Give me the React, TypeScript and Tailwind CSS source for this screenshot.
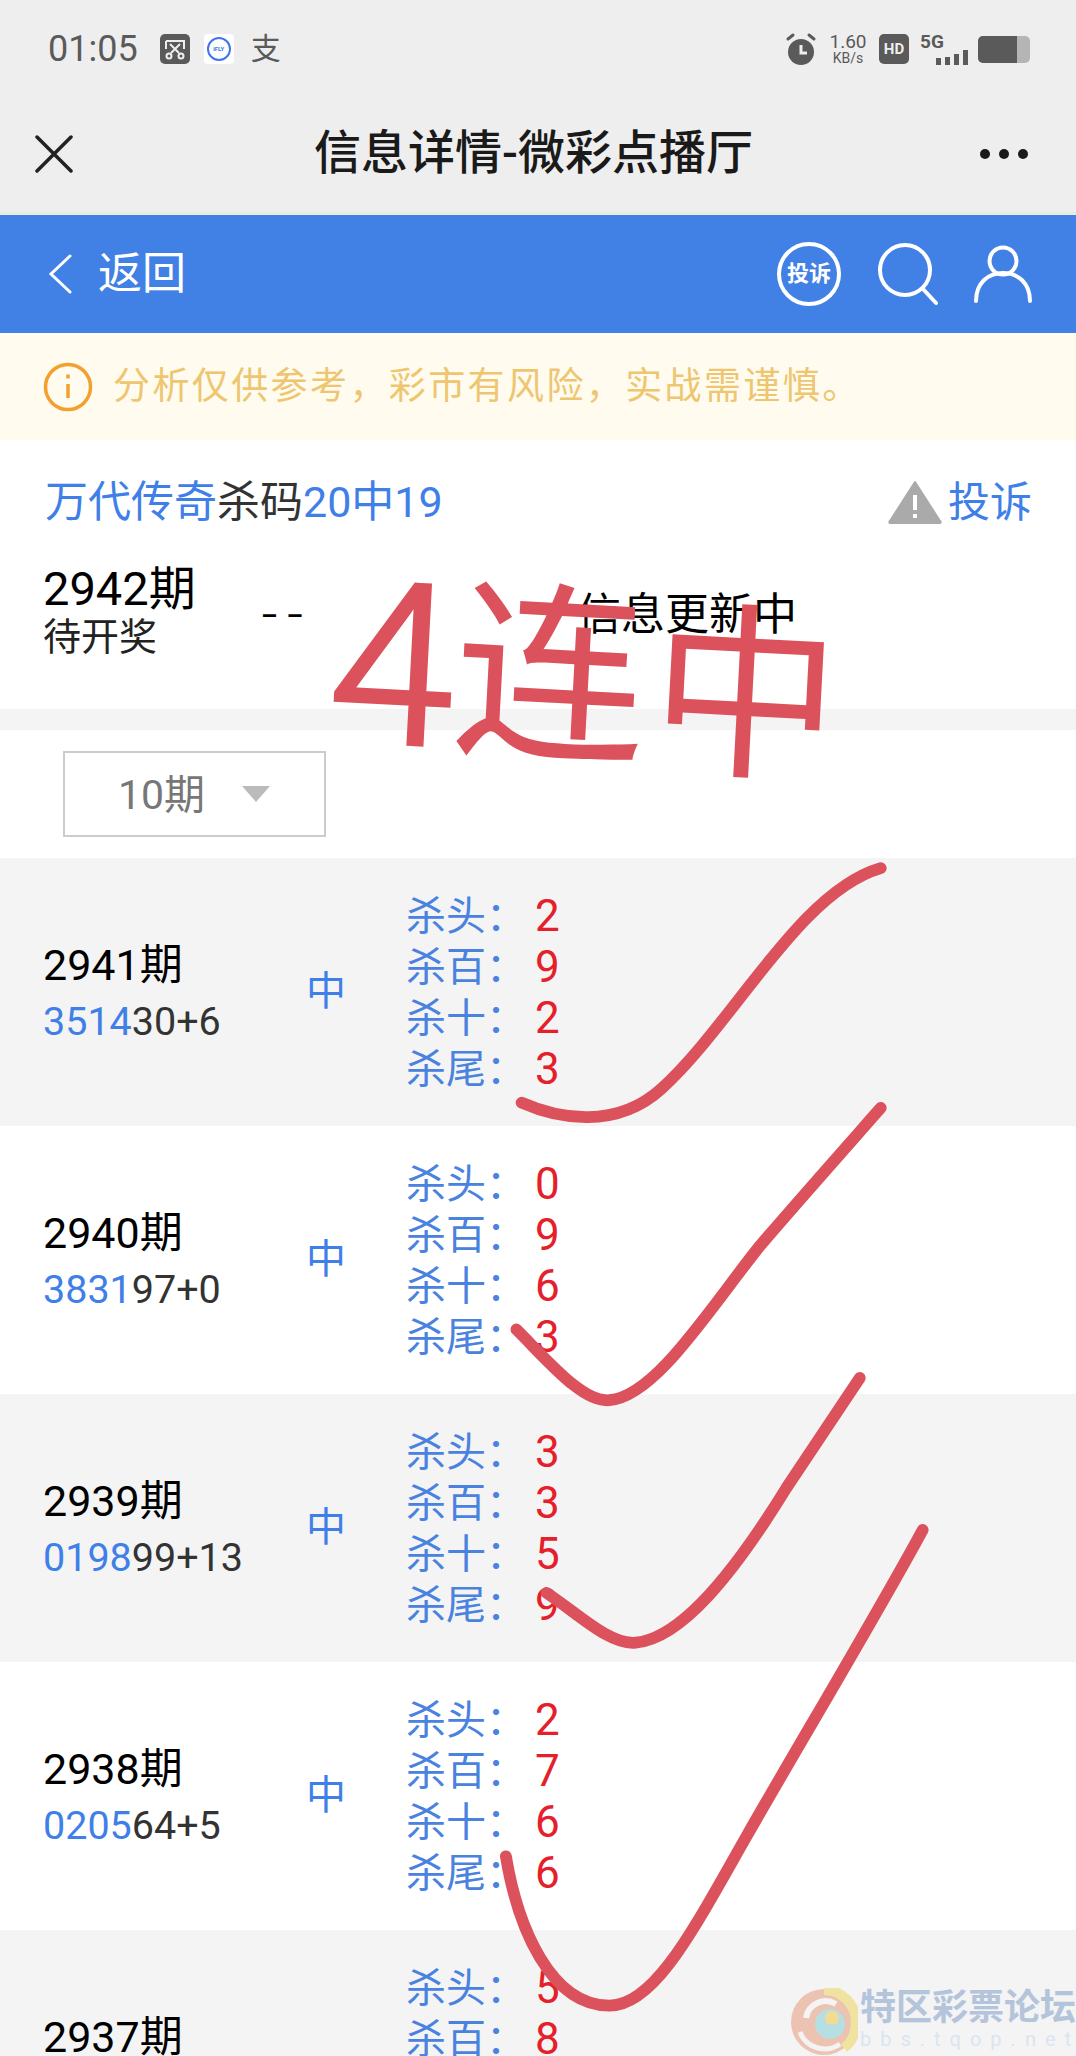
import React from "react";

const ROWS = [
  { issue: "2941期", head: "3514", tail: "30+6", kills: ["2", "9", "2", "3"] },
  { issue: "2940期", head: "3831", tail: "97+0", kills: ["0", "9", "6", "3"] },
  { issue: "2939期", head: "0198", tail: "99+13", kills: ["3", "3", "5", "9"] },
  { issue: "2938期", head: "0205", tail: "64+5", kills: ["2", "7", "6", "6"] },
  { issue: "2937期", head: "", tail: "", kills: ["5", "8", "", ""] },
];

const LABELS = ["杀头", "杀百", "杀十", "杀尾"];

function StatusIcons() {
  return (
    <div className="flex items-center text-[#5a5a5a]">
      <svg width="40" height="36" viewBox="0 0 40 36" fill="none" className="mr-[6px]">
        <circle cx="19" cy="21" r="13" fill="#5a5a5a" />
        <path d="M6 8l5-4M32 8l-5-4" stroke="#5a5a5a" strokeWidth="3" strokeLinecap="round" />
        <path d="M19 14v8h6" stroke="#eeeeee" strokeWidth="3" fill="none" />
      </svg>
      <div className="flex w-[40px] flex-col items-center leading-none">
        <span className="text-[19px] leading-[19px]">1.60</span>
        <span className="text-[14px] leading-[15px]">KB/s</span>
      </div>
      <div className="ml-[11px] flex h-[30px] w-[30px] items-center justify-center rounded-[5px] bg-[#5a5a5a] text-[15px] leading-none font-bold text-[#eeeeee]">
        HD
      </div>
      <div className="ml-[11px] flex w-[48px] flex-col">
        <span className="text-[19px] leading-[17px] font-bold">5G</span>
        <div className="flex h-[15px] items-end justify-end gap-[4px]">
          <span className="h-[7px] w-[5px] bg-[#5a5a5a]" />
          <span className="h-[8px] w-[5px] bg-[#5a5a5a]" />
          <span className="h-[11px] w-[5px] bg-[#5a5a5a]" />
          <span className="h-[15px] w-[5px] bg-[#5a5a5a]" />
        </div>
      </div>
      <div className="ml-[10px] flex h-[27px] w-[52px] overflow-hidden rounded-[5px] bg-[#b5b5b5]">
        <div className="h-full w-[39px] bg-[#5a5a5a]" />
      </div>
    </div>
  );
}

function Row({ row, index }: { row: (typeof ROWS)[number]; index: number }) {
  return (
    <div className={`flex h-[268px] items-center ${index % 2 === 0 ? "bg-[#f4f4f4]" : "bg-white"}`}>
      <div className="w-[306px] pl-[43px]">
        <div className="h-[56px] text-[43px] leading-[56px] text-black">{row.issue}</div>
        <div className="h-[55px] text-[39.5px] leading-[58px] text-[#333333]">
          <span className="text-[#3f80e8]">{row.head}</span>
          {row.tail}
        </div>
      </div>
      <div className="w-[100px] text-[40px] text-[#3f80e8]">{row.head ? "中" : ""}</div>
      <div className="pt-[2px]">
        {LABELS.map((label, i) => (
          <div key={label} className="flex h-[51px] items-center text-[40px] leading-[51px]">
            <span className="w-[129px] text-[#4a82e0]">{label}：</span>
            <span className="text-[44px] text-[#e5202a]">{row.kills[i]}</span>
          </div>
        ))}
      </div>
    </div>
  );
}

export default function App() {
  return (
    <div className="relative h-[2056px] w-[1076px] overflow-hidden bg-white font-['Roboto','Noto_Sans_CJK_SC',sans-serif]">
      {/* phone status bar */}
      <div className="flex h-[98px] items-center justify-between bg-[#eeeeee] pr-[46px] pl-[48px]">
        <div className="flex items-center">
          <span className="text-[36px] text-[#5a5a5a]">01:05</span>
          <div className="ml-[22px] flex h-[30px] w-[30px] items-center justify-center rounded-[5px] bg-[#5a5a5a]">
            <svg width="22" height="22" viewBox="0 0 22 22" fill="none" stroke="#eeeeee" strokeWidth="2">
              <path d="M2 3h18v8M2 3v8" />
              <path d="M6 6l9 9M16 6l-9 9" />
              <circle cx="5" cy="18" r="2.5" />
              <circle cx="17" cy="18" r="2.5" />
            </svg>
          </div>
          <div className="ml-[14px] flex h-[30px] w-[30px] items-center justify-center rounded-[4px] bg-white">
            <div className="flex h-[24px] w-[24px] items-center justify-center rounded-full border-2 border-[#3f74f0] text-[6px] leading-none font-bold text-[#3f74f0]">
              iFLY
            </div>
          </div>
          <span className="ml-[17px] text-[30px] leading-none text-[#5a5a5a]">支</span>
        </div>
        <StatusIcons />
      </div>

      {/* title bar */}
      <div className="relative flex h-[116px] items-center justify-between border-b-2 border-[#e3efdc] bg-[#eeeeee] pr-[48px] pb-[3px] pl-[35px]">
        <svg width="38" height="38" viewBox="0 0 38 38" stroke="#222222" strokeWidth="3.5" strokeLinecap="round">
          <path d="M2 2l34 34M36 2L2 36" />
        </svg>
        <span className="ml-[14px] text-[47px] font-medium text-[#1a1a1a]">信息详情-微彩点播厅</span>
        <div className="flex gap-[9px]">
          <span className="h-[10px] w-[10px] rounded-full bg-[#1a1a1a]" />
          <span className="h-[10px] w-[10px] rounded-full bg-[#1a1a1a]" />
          <span className="h-[10px] w-[10px] rounded-full bg-[#1a1a1a]" />
        </div>
      </div>
      <div className="h-[1px] bg-[#eeeeee]" />

      {/* blue header */}
      <div className="flex h-[118px] items-center justify-between bg-[#4180e5] pr-[44px] pl-[48px]">
        <div className="flex items-center">
          <svg width="24" height="40" viewBox="0 0 24 40" fill="none" stroke="white" strokeWidth="3" strokeLinecap="round">
            <path d="M22 2L3 20l19 18" />
          </svg>
          <span className="ml-[26px] text-[44px] leading-none text-white">返回</span>
        </div>
        <div className="flex items-center">
          <div className="flex h-[64px] w-[64px] items-center justify-center rounded-full border-[4px] border-white text-[22px] leading-none font-bold whitespace-nowrap text-white">
            投诉
          </div>
          <svg width="62" height="64" viewBox="0 0 62 64" fill="none" stroke="white" strokeWidth="4" strokeLinecap="round" className="ml-[36px]">
            <circle cx="28" cy="28" r="25" />
            <path d="M46 47l13 14" />
          </svg>
          <svg width="58" height="60" viewBox="0 0 58 60" fill="none" stroke="white" strokeWidth="4" strokeLinecap="round" className="ml-[35px]">
            <circle cx="29" cy="17" r="13.5" />
            <path d="M2 57c0-18 12-28 27-28s27 10 27 28" />
          </svg>
        </div>
      </div>

      {/* notice */}
      <div className="flex h-[107px] items-center bg-[#fffbef] pl-[43px]">
        <svg width="50" height="50" viewBox="0 0 50 50" fill="none" stroke="#f3a02e" strokeWidth="3.5">
          <circle cx="25" cy="25" r="22.5" />
          <path d="M25 22v14" />
          <path d="M25 12.5v4" />
        </svg>
        <span className="ml-[20px] text-[37px] tracking-[2.4px] text-[#eec66f]">分析仅供参考，彩市有风险，实战需谨慎。</span>
      </div>

      {/* current issue */}
      <div className="h-[269px] bg-white">
        <div className="flex h-[124px] items-center justify-between pr-[44px] pl-[45px]">
          <div className="text-[43px] text-[#3f80e8]">
            万代传奇<span className="text-[#333333]">杀码</span>20中19
          </div>
          <div className="flex items-center text-[42px] text-[#3f80e8]">
            <svg width="54" height="44" viewBox="0 0 54 44" className="mr-[6px]">
              <path d="M27 2L52 41a1 1 0 0 1-1 2H3a1 1 0 0 1-1-2z" fill="#aaaaaa" stroke="#aaaaaa" strokeWidth="2" strokeLinejoin="round" />
              <path d="M27 15v15M27 34v4" stroke="white" strokeWidth="4" />
            </svg>
            投诉
          </div>
        </div>
        <div className="flex items-center pl-[43px]">
          <div className="w-[218px]">
            <div className="text-[47px] leading-[50px] text-black">2942期</div>
            <div className="text-[38px] leading-[46px] text-[#222222]">待开奖</div>
          </div>
          <div className="w-[316px] pt-[8px] text-[26px] leading-none font-semibold tracking-[9px] text-black">––</div>
          <div className="pt-[6px] text-[44px] leading-none text-black">信息更新中</div>
        </div>
      </div>
      <div className="h-[21px] bg-[#f4f4f4]" />

      {/* period filter */}
      <div className="flex h-[128px] items-center bg-white pl-[63px]">
        <div className="flex h-[86px] w-[263px] items-center border-2 border-[#cccccc] pl-[53px]">
          <span className="pt-[4px] text-[41px] text-[#777777]">10期</span>
          <span className="ml-[37px] h-0 w-0 border-x-[14px] border-t-[16px] border-x-transparent border-t-[#bbbbbb]" />
        </div>
      </div>

      {ROWS.map((row, i) => (
        <Row key={row.issue} row={row} index={i} />
      ))}

      {/* hand-drawn annotation */}
      <div className="absolute top-[535px] left-[330px] flex rotate-[3deg] items-start leading-[1.25] whitespace-nowrap text-[#dc525c]">
        <span className="translate-y-[2px] text-[224px] font-light [-webkit-text-stroke:4px_#dc525c]">4</span>
        <span className="translate-y-[26px] text-[192px]">连</span>
        <span className="ml-[6px] translate-y-[38px] text-[188px]">中</span>
      </div>
      <svg viewBox="0 0 821 1568" className="absolute inset-0 h-[2056px] w-[1076px]" fill="none" stroke="#dc525c" strokeWidth="9" strokeLinecap="round">
        <path d="M398 841C425 853 470 862 505 830C560 780 610 680 672 662" />
        <path d="M394 1014C420 1040 445 1070 465 1068C500 1065 540 1000 580 950C610 915 650 870 672 845" />
        <path d="M417 1215C440 1230 465 1255 485 1253C520 1250 560 1200 600 1135C620 1105 640 1075 656 1051" />
        <path d="M386 1416C395 1470 420 1530 465 1530C500 1530 530 1470 570 1400C610 1330 670 1230 704 1167" />
      </svg>

      {/* forum watermark */}
      <div className="absolute top-[1988px] left-[790px] flex opacity-80">
        <svg width="68" height="68" viewBox="0 0 68 68" fill="none">
          <circle cx="34" cy="34" r="33" fill="#e9b7a0" />
          <path d="M34 2a32 32 0 0 1 32 32c0 10-4 20-12 26" stroke="#f0e08e" strokeWidth="10" />
          <path d="M10 44c6 16 26 22 40 12" stroke="#f3f3f3" strokeWidth="5" />
          <path d="M16 30a20 20 0 0 1 30-14" stroke="#f5f5f5" strokeWidth="6" />
          <circle cx="40" cy="36" r="15" fill="#a6dbe0" />
          <circle cx="42" cy="30" r="7" fill="#f3d67c" />
        </svg>
        <div className="ml-[2px]">
          <div className="text-[36px] leading-[40px] font-bold whitespace-nowrap text-[#a4b9d6]">特区彩票论坛</div>
          <div className="text-[20px] leading-[22px] tracking-[9px] whitespace-nowrap text-[#d5e2f0]">bbs.tqop.net</div>
        </div>
      </div>
    </div>
  );
}
